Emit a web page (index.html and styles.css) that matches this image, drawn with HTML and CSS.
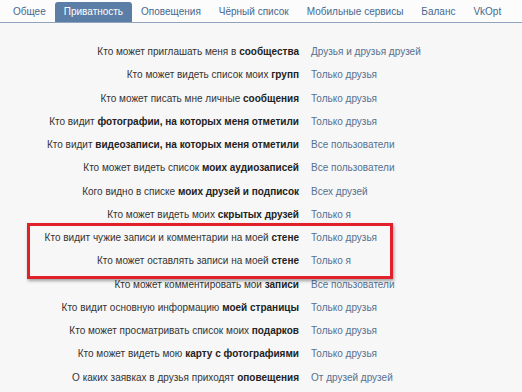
FILE: index.html
```html
<!DOCTYPE html>
<html>
<head>
<meta charset="utf-8">
<title>Настройки приватности</title>
<link rel="stylesheet" href="styles.css">
</head>
<body>
<div class="page">
  <ul class="tabs">
    <li>Общее</li>
    <li class="cur">Приватность</li>
    <li>Оповещения</li>
    <li>Чёрный список</li>
    <li>Мобильные сервисы</li>
    <li>Баланс</li>
    <li>VkOpt</li>
  </ul>
  <div class="settings">
    <div class="row"><div class="label">Кто может приглашать меня в <b>сообщества</b></div><a class="value">Друзья и друзья друзей</a></div>
    <div class="row"><div class="label">Кто может видеть список моих <b>групп</b></div><a class="value">Только друзья</a></div>
    <div class="row"><div class="label">Кто может писать мне личные <b>сообщения</b></div><a class="value">Только друзья</a></div>
    <div class="row"><div class="label">Кто видит <b>фотографии, на которых меня отметили</b></div><a class="value">Только друзья</a></div>
    <div class="row"><div class="label">Кто видит <b>видеозаписи, на которых меня отметили</b></div><a class="value">Все пользователи</a></div>
    <div class="row"><div class="label">Кто может видеть список <b>моих аудиозаписей</b></div><a class="value">Все пользователи</a></div>
    <div class="row"><div class="label">Кого видно в списке <b>моих друзей и подписок</b></div><a class="value">Всех друзей</a></div>
    <div class="row"><div class="label">Кто может видеть моих <b>скрытых друзей</b></div><a class="value">Только я</a></div>
    <div class="row"><div class="label">Кто видит чужие записи и комментарии на моей <b>стене</b></div><a class="value">Только друзья</a></div>
    <div class="row"><div class="label">Кто может оставлять записи на моей <b>стене</b></div><a class="value">Только я</a></div>
    <div class="row"><div class="label">Кто может комментировать мои <b>записи</b></div><a class="value">Все пользователи</a></div>
    <div class="row"><div class="label">Кто видит основную информацию <b>моей страницы</b></div><a class="value">Только друзья</a></div>
    <div class="row"><div class="label">Кто может просматривать список моих <b>подарков</b></div><a class="value">Только друзья</a></div>
    <div class="row"><div class="label">Кто может видеть мою <b>карту с фотографиями</b></div><a class="value">Только друзья</a></div>
    <div class="row"><div class="label">О каких заявках в друзья приходят <b>оповещения</b></div><a class="value">От друзей друзей</a></div>
    <div class="mark"></div>
  </div>
</div>
</body>
</html>
```

FILE: styles.css
```css
*{margin:0;padding:0;}
ul,li{list-style:none;}
body{background:#f7f7f7;font-family:"Liberation Sans",Arial,sans-serif;font-size:10px;color:#333;}
.page{width:522px;height:392px;overflow:hidden;}
.tabs{display:flex;height:20px;padding:2px 0 0 4px;border-bottom:1px solid #8fa3ba;background:#fcfcfc;}
.tabs li{padding:0 9px;line-height:20px;color:#45688e;white-space:nowrap;}
.tabs li.cur{background:#5b7ea6;color:#fff;border-radius:3px 3px 0 0;}
.settings{position:relative;padding-top:17px;}
.row{display:flex;height:23.25px;align-items:center;}
.label{width:299px;text-align:right;white-space:nowrap;}
.label b{color:#222;}
.value{margin-left:12px;color:#56708f;white-space:nowrap;}
.mark{position:absolute;left:27px;top:200px;width:360px;height:50px;border:3px solid #e0202a;box-shadow:1px 2px 3px rgba(0,0,0,.35);}
```
